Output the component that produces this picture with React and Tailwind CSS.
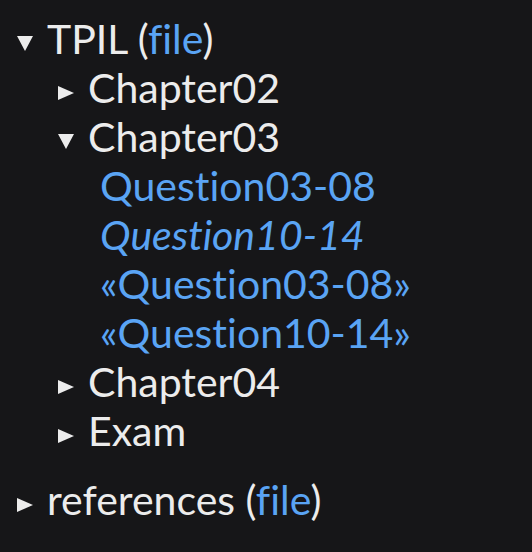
const Down = () => (
  <svg width="16" height="15" viewBox="0 0 16 15" className="shrink-0 mt-[10px]">
    <polygon points="0,0 16,0 8,15" fill="#ececec" />
  </svg>
)

const Right = () => (
  <svg width="16" height="14" viewBox="0 0 16 14" className="shrink-0 mt-[10px]">
    <polygon points="0,0 16,7 0,14" fill="#ececec" />
  </svg>
)

export default function App() {
  return (
    <div
      className="w-[532px] h-[552px] bg-[#161618] text-[#ececec] text-[41px] pt-[14px] [font-variant-ligatures:none]"
      style={{ fontFamily: 'Lato, "Noto Sans", sans-serif' }}
    >
      <div className="flex items-center h-[49px] pl-[17px]">
        <Down />
        <span className="ml-[14px]">
          TPIL (<span className="text-[#5aa4f4]">file</span>)
        </span>
      </div>
      <div className="flex items-center h-[49px] pl-[58px]">
        <Right />
        <span className="ml-[14px]">Chapter02</span>
      </div>
      <div className="flex items-center h-[49px] pl-[58px]">
        <Down />
        <span className="ml-[14px]">Chapter03</span>
      </div>
      <div className="pl-[100px] text-[#5aa4f4]">
        <div className="flex items-center h-[49px]">Question03-08</div>
        <div className="flex items-center h-[49px] italic">Question10-14</div>
        <div className="flex items-center h-[49px]">«Question03-08»</div>
        <div className="flex items-center h-[49px]">«Question10-14»</div>
      </div>
      <div className="flex items-center h-[49px] pl-[58px]">
        <Right />
        <span className="ml-[14px]">Chapter04</span>
      </div>
      <div className="flex items-center h-[49px] pl-[58px]">
        <Right />
        <span className="ml-[14px]">Exam</span>
      </div>
      <div className="flex items-center h-[49px] pl-[17px] mt-[20px]">
        <Right />
        <span className="ml-[14px]">
          references (<span className="text-[#5aa4f4]">file</span>)
        </span>
      </div>
    </div>
  )
}
